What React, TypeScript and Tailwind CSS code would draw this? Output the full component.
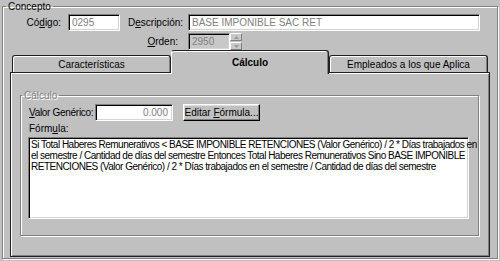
import React from "react";

// ─── Win95-ish primitives ────────────────────────────────────────────────────

const etched = "border border-[#808080] shadow-[inset_1px_1px_0_#fff,1px_1px_0_#fff]";
const sunken =
  "border-t border-l border-[#808080] border-b border-r border-b-white border-r-white shadow-[inset_1px_1px_0_#000,inset_-1px_-1px_0_#d4d4d4]";
const raised =
  "border-t border-l border-white border-b border-r border-b-black border-r-black shadow-[inset_-1px_-1px_0_#808080,inset_1px_1px_0_#dfdfdf]";

function U({ children }: { children: React.ReactNode }) {
  return <span className="underline underline-offset-[1px]">{children}</span>;
}

function Spinner() {
  return (
    <div className="flex h-[17px] w-[12px] flex-col">
      <div className="flex h-[8px] items-center justify-center border-t border-l border-r border-b border-t-white border-l-white border-r-[#808080] border-b-[#808080] bg-[#c8c8c8]">
        <svg width="5" height="3" viewBox="0 0 5 3" aria-hidden="true">
          <path d="M2.5 0 L5 3 L0 3 Z" fill="#9a9a9a" />
        </svg>
      </div>
      <div className="mt-[1px] flex h-[8px] items-center justify-center border-t border-l border-r border-b border-t-white border-l-white border-r-[#808080] border-b-[#808080] bg-[#c8c8c8]">
        <svg width="5" height="3" viewBox="0 0 5 3" aria-hidden="true">
          <path d="M0 0 L5 0 L2.5 3 Z" fill="#9a9a9a" />
        </svg>
      </div>
    </div>
  );
}

// ─── Tabs ────────────────────────────────────────────────────────────────────

function Tab({ label, selected }: { label: string; selected?: boolean }) {
  if (selected) {
    return (
      <div className="relative z-10 -mb-[2px] flex h-[24px] w-[158px] items-center justify-center rounded-t-[3px] border-t border-l border-r border-t-[#202020] border-l-white border-r-[#202020] bg-[#c0c0c0] pb-[1px] font-bold shadow-[inset_-1px_0_0_#808080,inset_0_1px_0_#fff]">
        {label}
      </div>
    );
  }
  return (
    <div className="flex h-[17px] w-[159px] items-center justify-center rounded-t-[3px] border-t border-l border-r border-[#202020] bg-[#c0c0c0] shadow-[inset_1px_1px_0_#fff,inset_-1px_0_0_#808080]">
      {label}
    </div>
  );
}

// ─── Main ────────────────────────────────────────────────────────────────────

export default function App() {
  return (
    <div
      className="h-[261px] w-[500px] overflow-hidden bg-[#c0c0c0] px-[2px] text-[10px] leading-[13px] text-black"
      style={{ fontFamily: '"Liberation Sans", Arial, sans-serif' }}
    >
      <fieldset className={`h-[259px] w-[496px] ${etched}`}>
        <legend className="ml-[3px] px-[2px]">Concepto</legend>

        {/* Código / Descripción */}
        <div className="mt-[1px] flex items-center">
          <span className="w-[58px] text-right">
            Có<U>d</U>igo:
          </span>
          <div className={`ml-[7px] flex h-[17px] w-[52px] items-center bg-white pl-[3px] text-[#808080] ${sunken}`}>0295</div>
          <span className="ml-[8px] w-[52px] text-right whitespace-nowrap">
            D<U>e</U>scripción:
          </span>
          <div className={`ml-[8px] flex h-[17px] w-[292px] items-center bg-white pl-[3px] text-[#808080] ${sunken}`}>
            BASE IMPONIBLE SAC RET
          </div>
        </div>

        {/* Orden */}
        <div className="mt-[2px] flex items-center">
          <span className="w-[175px] text-right">
            <U>O</U>rden:
          </span>
          <div className={`ml-[10px] flex h-[17px] w-[42px] items-center bg-[#c8c8c8] pl-[3px] text-[#808080] ${sunken}`}>2950</div>
          <Spinner />
        </div>

        {/* Tab control */}
        <div className="-mt-[1px] ml-[7px] w-[480px]">
          <div className="flex h-[23px] items-end pl-[2px]">
            <Tab label="Características" />
            <Tab label="Cálculo" selected />
            <Tab label="Empleados a los que Aplica" />
          </div>
          <div className="h-[185px] border border-[#202020] shadow-[inset_1px_1px_0_#fff,inset_-1px_-1px_0_#808080]">
            <fieldset className={`mt-[16px] ml-[9px] h-[147px] w-[459px] ${etched}`}>
              <legend className="ml-[1px] px-[2px] text-[#808080] [text-shadow:1px_1px_0_#fff]">Cálculo</legend>

              <div className="mt-[2px] flex items-center pl-[8px]">
                <span className="w-[66px] whitespace-nowrap tracking-[-0.3px]">
                  <U>V</U>alor Genérico:
                </span>
                <div className={`flex h-[17px] w-[78px] items-center justify-end bg-white pr-[4px] text-[#808080] ${sunken}`}>0.000</div>
                <button
                  type="button"
                  className={`ml-[10px] flex h-[17px] w-[77px] items-center justify-center whitespace-nowrap bg-[#c0c0c0] ${raised}`}
                >
                  <span>
                    Editar <U>F</U>órmula...
                  </span>
                </button>
              </div>

              <div className="mt-[1px] pl-[8px]">
                Fórm<U>u</U>la:
              </div>

              <div
                className={`mt-[2px] ml-[7px] h-[82px] w-[441px] bg-white px-[2px] pt-[1px] leading-[11px] tracking-[-0.5px] whitespace-nowrap ${sunken}`}
              >
                Si Total Haberes Remunerativos &lt; BASE IMPONIBLE RETENCIONES (Valor Genérico) / 2 * Días trabajados en
                <br />
                el semestre / Cantidad de días del semestre Entonces Total Haberes Remunerativos Sino BASE IMPONIBLE
                <br />
                RETENCIONES (Valor Genérico) / 2 * Días trabajados en el semestre / Cantidad de días del semestre
              </div>
            </fieldset>
          </div>
        </div>
      </fieldset>
    </div>
  );
}
